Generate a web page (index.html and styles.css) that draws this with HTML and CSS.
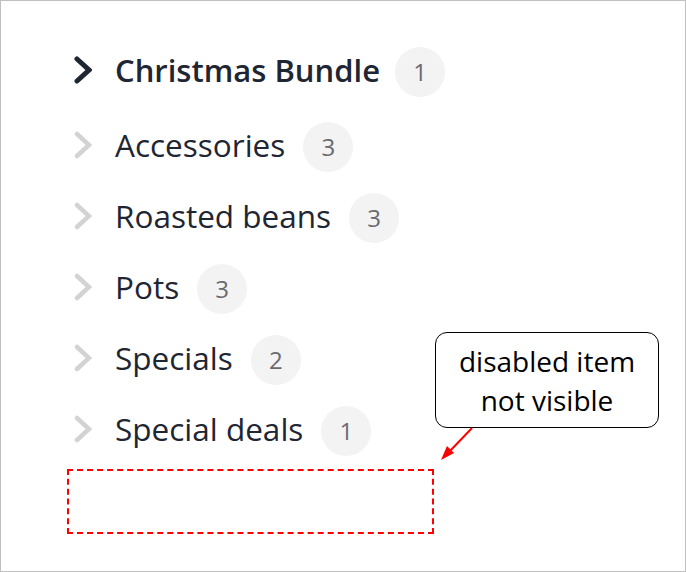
FILE: index.html
```html
<!DOCTYPE html>
<html>
<head>
<meta charset="utf-8">
<link rel="stylesheet" href="styles.css">
</head>
<body>
<div class="frame">
  <ul class="tree">
    <li class="item active">
      <span class="chev"><svg viewBox="0 0 18 28" width="18" height="28"><polyline points="3,3 15,14 3,25"/></svg></span>
      <span class="label">Christmas Bundle</span><span class="badge">1</span>
    </li>
    <li class="item">
      <span class="chev"><svg viewBox="0 0 18 28" width="18" height="28"><polyline points="3,3 15,14 3,25"/></svg></span>
      <span class="label">Accessories</span><span class="badge">3</span>
    </li>
    <li class="item">
      <span class="chev"><svg viewBox="0 0 18 28" width="18" height="28"><polyline points="3,3 15,14 3,25"/></svg></span>
      <span class="label">Roasted beans</span><span class="badge">3</span>
    </li>
    <li class="item">
      <span class="chev"><svg viewBox="0 0 18 28" width="18" height="28"><polyline points="3,3 15,14 3,25"/></svg></span>
      <span class="label">Pots</span><span class="badge">3</span>
    </li>
    <li class="item">
      <span class="chev"><svg viewBox="0 0 18 28" width="18" height="28"><polyline points="3,3 15,14 3,25"/></svg></span>
      <span class="label">Specials</span><span class="badge">2</span>
    </li>
    <li class="item">
      <span class="chev"><svg viewBox="0 0 18 28" width="18" height="28"><polyline points="3,3 15,14 3,25"/></svg></span>
      <span class="label">Special deals</span><span class="badge">1</span>
    </li>
    <li class="slot"></li>
  </ul>
  <div class="callout">disabled item<br>not visible</div>
  <svg class="arrow" width="686" height="572" viewBox="0 0 686 572">
    <line x1="472" y1="428" x2="449" y2="452"/>
    <polygon points="441,460 454,453 447,446"/>
  </svg>
</div>
</body>
</html>
```
FILE: styles.css
```css
html, body {
  margin: 0;
  padding: 0;
  background: #fff;
}
.frame {
  position: relative;
  width: 686px;
  height: 572px;
  box-sizing: border-box;
  border: 1px solid #c0c0c0;
  font-family: "Open Sans", "Noto Sans", sans-serif;
  overflow: hidden;
}
.tree {
  list-style: none;
  margin: 0;
  padding: 33px 0 0 66px;
}
.item {
  display: flex;
  align-items: center;
  height: 71px;
  padding-left: 7px;
}
.item.active {
  margin-bottom: 4px;
}
.chev {
  display: flex;
  width: 18px;
  margin-right: 23px;
}
.chev polyline {
  fill: none;
  stroke: #d3d3d3;
  stroke-width: 4.5;
  stroke-linecap: round;
  stroke-linejoin: miter;
}
.active .chev polyline {
  stroke: #1f2633;
  stroke-width: 5;
}
.label {
  font-size: 31.5px;
  color: #1f2633;
  white-space: nowrap;
}
.active .label {
  font-size: 31px;
  font-weight: 600;
}
.badge {
  margin-left: 18px;
  width: 50px;
  height: 50px;
  border-radius: 50%;
  background: #f3f3f3;
  color: #6a6a70;
  font-size: 24px;
  display: flex;
  align-items: center;
  justify-content: center;
  margin-top: 4px;
}
.active .badge {
  margin-left: 15px;
}
.slot {
  margin-top: 5px;
  width: 367px;
  height: 65px;
  box-sizing: border-box;
  border: 2px dashed #ff0000;
}
.callout {
  position: absolute;
  left: 434px;
  top: 331px;
  width: 224px;
  height: 96px;
  box-sizing: border-box;
  border: 1px solid #000;
  border-radius: 12px;
  background: #fff;
  font-size: 28px;
  line-height: 39px;
  padding-top: 9px;
  text-align: center;
  color: #000;
}
.arrow {
  position: absolute;
  left: -1px;
  top: -1px;
}
.arrow line {
  stroke: #ff0000;
  stroke-width: 2;
}
.arrow polygon {
  fill: #ff0000;
}
```
